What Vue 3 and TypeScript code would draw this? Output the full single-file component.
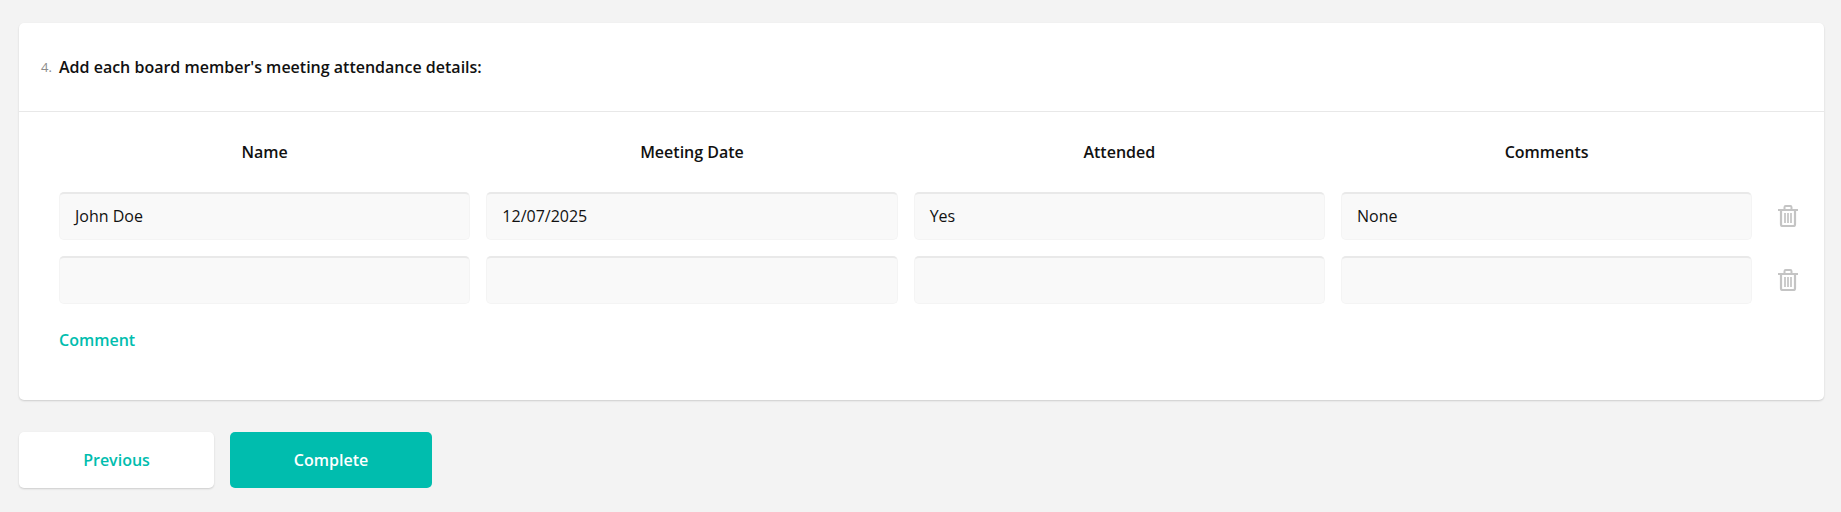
<script setup lang="ts">
interface Row { name: string; date: string; attended: string; comments: string }
const columns: string[] = ['Name', 'Meeting Date', 'Attended', 'Comments']
const rows: Row[] = [
  { name: 'John Doe', date: '12/07/2025', attended: 'Yes', comments: 'None' },
  { name: '', date: '', attended: '', comments: '' },
]
</script>

<template>
  <div class="page">
    <section class="card">
      <header class="question">
        <span class="num">4.</span>
        <span class="title">Add each board member's meeting attendance details:</span>
      </header>
      <div class="body">
        <div class="grid">
          <div v-for="c in columns" :key="c" class="col-head">{{ c }}</div>
          <span></span>
          <template v-for="(r, i) in rows" :key="i">
            <div class="field">{{ r.name }}</div>
            <div class="field">{{ r.date }}</div>
            <div class="field">{{ r.attended }}</div>
            <div class="field">{{ r.comments }}</div>
            <svg class="trash" viewBox="0 0 20 22" width="20" height="22" fill="none" stroke="#c4c4c4">
              <path d="M0 5h20" stroke-width="2" />
              <path d="M6.5 4.5V2.2Q6.5 1 7.7 1h4.6q1.2 0 1.2 1.2v2.3" stroke-width="2" />
              <path d="M3 5v14.5Q3 21 4.5 21h11q1.5 0 1.5-1.5V5" stroke-width="2.2" />
              <path d="M7 8v10M10 8v10M13 8v10" stroke-width="1.7" />
            </svg>
          </template>
        </div>
        <a class="comment">Comment</a>
      </div>
    </section>
    <div class="actions">
      <button class="btn prev">Previous</button>
      <button class="btn done">Complete</button>
    </div>
  </div>
</template>

<style>
html, body { margin: 0; background: #f3f3f3; }
</style>

<style scoped>
.page {
  box-sizing: border-box;
  width: 1841px;
  height: 512px;
  padding: 23px 17px 0 19px;
  background: #f3f3f3;
  font-family: "Open Sans", sans-serif;
  color: #111;
  overflow: hidden;
}
.card {
  box-sizing: border-box;
  height: 377px;
  background: #fff;
  border-radius: 5px;
  box-shadow: 0 1px 2px rgba(0, 0, 0, 0.16);
}
.question {
  box-sizing: border-box;
  height: 89px;
  display: flex;
  align-items: center;
  padding-left: 22px;
  border-bottom: 1px solid #e8e8e8;
}
.num {
  width: 18px;
  font-size: 13px;
  color: #8c8c8c;
}
.title {
  font-size: 16px;
  font-weight: 600;
}
.body { padding: 0 40px; }
.grid {
  display: grid;
  grid-template-columns: repeat(4, 411.33px) 30px;
  column-gap: 16px;
  row-gap: 16px;
  align-items: center;
  margin-right: -30px;
}
.col-head {
  height: 64px;
  display: flex;
  align-items: center;
  justify-content: center;
  font-size: 16px;
  font-weight: 600;
  padding-top: 15px;
  box-sizing: border-box;
}
.field {
  box-sizing: border-box;
  height: 48px;
  padding: 0 15px 2px;
  display: flex;
  align-items: center;
  background: #f9f9f9;
  border-radius: 5px;
  border: 1px solid #f4f4f4;
  border-top: 2px solid #e9e9e9;
  font-size: 16px;
}
.trash { justify-self: end; }
.comment {
  display: block;
  margin-top: 25px;
  font-size: 16px;
  font-weight: 600;
  color: #00bdae;
}
.actions {
  display: flex;
  gap: 16px;
  margin-top: 32px;
}
.btn {
  height: 56px;
  border: 0;
  border-radius: 5px;
  font: 600 16px "Open Sans", sans-serif;
}
.prev {
  width: 195px;
  background: #fff;
  color: #00bdae;
  box-shadow: 0 1px 2px rgba(0, 0, 0, 0.16);
}
.done {
  width: 202px;
  background: #00bdae;
  color: #fff;
}
</style>
